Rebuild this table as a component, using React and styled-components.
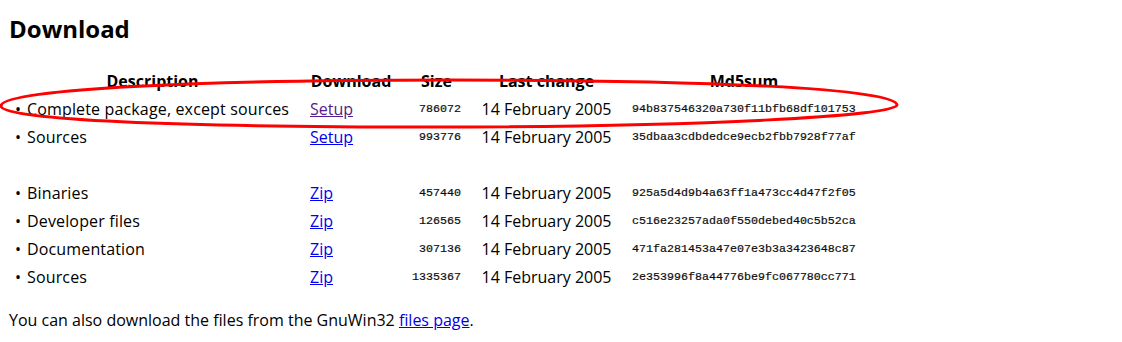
import React from 'react';
import styled, { createGlobalStyle } from 'styled-components';

const GlobalStyle = createGlobalStyle`
  body {
    margin: 0;
    background: #fff;
    font-family: 'Open Sans', 'Noto Sans', sans-serif;
    color: #000;
  }
`;

const Page = styled.div`
  position: relative;
  width: 1122px;
  height: 342px;
  padding: 13px 9px 0;
  box-sizing: border-box;
  overflow: hidden;
`;

const Title = styled.h2`
  margin: 0 0 22px;
  font-size: 24px;
  font-weight: 700;
  line-height: 32px;
`;

const Table = styled.table`
  border-collapse: collapse;
  table-layout: fixed;
  margin-left: -1px;
  font-size: 16px;
`;

const HeadCell = styled.th`
  width: ${p => p.$w}px;
  padding: 0 10px;
  height: 28px;
  font-weight: 700;
  text-align: center;
  white-space: nowrap;
  &:first-child { padding-left: 7px; padding-right: 10px; }
`;

const Cell = styled.td`
  padding: 0 10px;
  height: 28px;
  white-space: nowrap;
  text-align: ${p => p.$align || 'left'};
  &:first-child { padding-left: 7px; }
`;

const Mono = styled(Cell)`
  font-family: 'Liberation Mono', monospace;
  font-size: 11.67px;
  color: #111;
  -webkit-text-stroke: 0.2px #000;
`;

const Bullet = styled.span`
  display: inline-block;
  width: 12px;
`;

const Description = styled.span`
  letter-spacing: 0.15px;
`;

const Link = styled.a`
  color: ${p => (p.$visited ? '#551a8b' : '#0000ee')};
  text-decoration: underline;
`;

const Footer = styled.p`
  margin: 18px 0 0;
  font-size: 16px;
`;

const Overlay = styled.svg`
  position: absolute;
  left: 0;
  top: 0;
  pointer-events: none;
`;

const rows = [
  { name: 'Complete package, except sources', link: 'Setup', size: '786072', md5: '94b837546320a730f11bfb68df101753', visited: true },
  { name: 'Sources', link: 'Setup', size: '993776', md5: '35dbaa3cdbdedce9ecb2fbb7928f77af' },
  null,
  { name: 'Binaries', link: 'Zip', size: '457440', md5: '925a5d4d9b4a63ff1a473cc4d47f2f05' },
  { name: 'Developer files', link: 'Zip', size: '126565', md5: 'c516e23257ada0f550debed40c5b52ca' },
  { name: 'Documentation', link: 'Zip', size: '307136', md5: '471fa281453a47e07e3b3a3423648c87' },
  { name: 'Sources', link: 'Zip', size: '1335367', md5: '2e353996f8a44776be9fc067780cc771' },
];

export default function App() {
  return (
    <Page>
      <GlobalStyle />
      <Title>Download</Title>
      <Table>
        <thead>
          <tr>
            <HeadCell $w={275}>Description</HeadCell>
            <HeadCell $w={82}>Download</HeadCell>
            <HeadCell $w={49}>Size</HeadCell>
            <HeadCell $w={131}>Last change</HeadCell>
            <HeadCell $w={224}>Md5sum</HeadCell>
          </tr>
        </thead>
        <tbody>
          {rows.map((r, i) =>
            r ? (
              <tr key={i}>
                <Cell><Bullet>•</Bullet><Description>{r.name}</Description></Cell>
                <Cell><Link href="#" $visited={r.visited}>{r.link}</Link></Cell>
                <Mono $align="right">{r.size}</Mono>
                <Cell $align="center">14 February 2005</Cell>
                <Mono>{r.md5}</Mono>
              </tr>
            ) : (
              <tr key={i}><Cell colSpan={5} /></tr>
            )
          )}
        </tbody>
      </Table>
      <Footer>
        You can also download the files from the GnuWin32 <Link href="#">files page</Link>.
      </Footer>
      <Overlay width="1122" height="342">
        <path
          d="M 1,106 C 1,88 220,80 450,80 C 700,80 897,88 897,105 C 897,116 700,127 430,127 C 180,127 1,120 1,106 Z"
          fill="none"
          stroke="#ff0000"
          strokeWidth="3"
        />
      </Overlay>
    </Page>
  );
}
